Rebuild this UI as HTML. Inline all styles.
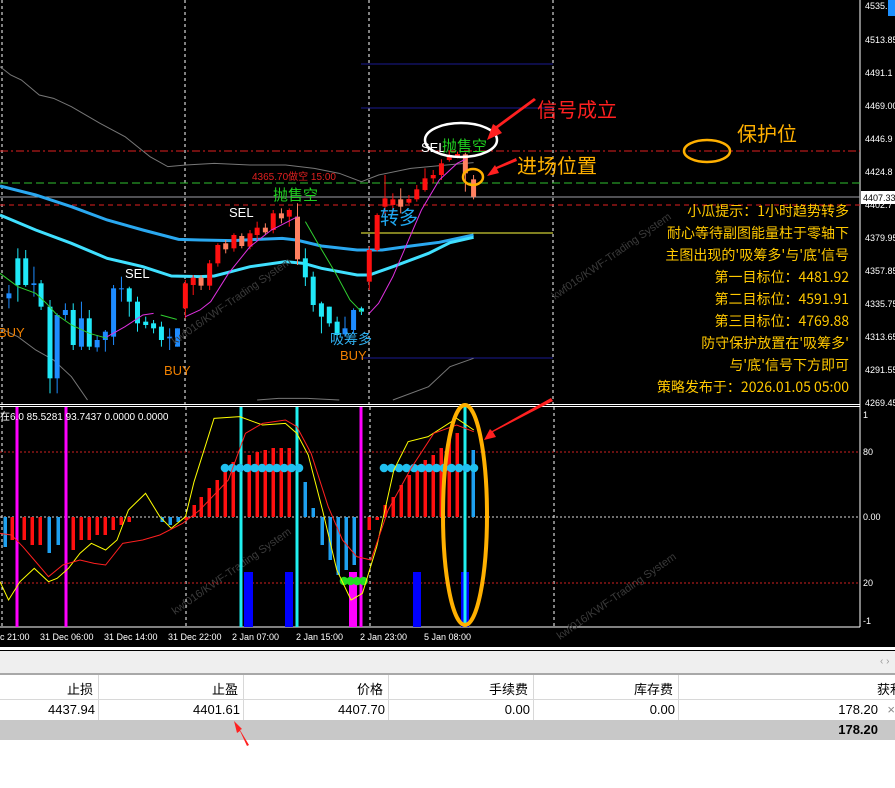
<!DOCTYPE html>
<html><head><meta charset="utf-8">
<style>
html,body{margin:0;padding:0;background:#fff;}
body{width:895px;height:788px;overflow:hidden;position:relative;font-family:"Liberation Sans","Noto Sans CJK SC",sans-serif;}
svg{position:absolute;left:0;top:0;}
.tb{position:absolute;left:0;width:895px;font-size:13px;color:#000;}
.cell{position:absolute;text-align:right;}
</style></head><body>
<svg id="s" width="895" height="788" viewBox="0 0 895 788" xmlns="http://www.w3.org/2000/svg">
<rect x="0" y="0" width="895" height="647" fill="#000"/>
<rect x="0" y="647" width="895" height="3" fill="#fff"/>
<rect x="0" y="650" width="895" height="1" fill="#000"/>
<rect x="0" y="651" width="895" height="22" fill="#efefef"/>
<rect x="0" y="673" width="895" height="2" fill="#a8a8a8"/>
<rect x="0" y="699" width="895" height="1" fill="#d8d8d8"/>
<rect x="0" y="720" width="895" height="20" fill="#c8c8c8"/>
<g fill="#d8d8d8"><rect x="98" y="675" width="1" height="45"/><rect x="243" y="675" width="1" height="45"/><rect x="388" y="675" width="1" height="45"/><rect x="533" y="675" width="1" height="45"/><rect x="678" y="675" width="1" height="45"/></g>
<text x="880" y="664" font-size="10" fill="#999">‹ ›</text>

<g stroke="#fff" stroke-dasharray="3,3" stroke-width="1">
<line x1="2" y1="0" x2="2" y2="404"/><line x1="185" y1="0" x2="185" y2="404"/><line x1="369" y1="0" x2="369" y2="404"/><line x1="553" y1="0" x2="553" y2="404"/>
</g>
<line x1="860" y1="0" x2="860" y2="627" stroke="#fff"/>
<line x1="0" y1="404.5" x2="860" y2="404.5" stroke="#fff"/>
<line x1="0" y1="406.5" x2="860" y2="406.5" stroke="#fff"/>
<line x1="0" y1="627" x2="860" y2="627" stroke="#fff"/>

<g stroke="#1a1a90" stroke-width="1"><line x1="361" y1="64" x2="553" y2="64"/><line x1="361" y1="108" x2="553" y2="108"/><line x1="361" y1="358" x2="553" y2="358"/></g>
<line x1="0" y1="151" x2="860" y2="151" stroke="#e02020" stroke-dasharray="8,3,2,3"/>
<line x1="0" y1="183" x2="860" y2="183" stroke="#30c030" stroke-dasharray="8,4"/>
<line x1="0" y1="197" x2="860" y2="197" stroke="#a0a0a8"/>
<line x1="0" y1="205" x2="860" y2="205" stroke="#e02020" stroke-dasharray="5,4"/>
<line x1="361" y1="233" x2="553" y2="233" stroke="#ffff40"/>

<g id="main" transform="scale(0.35714,0.33333)" fill="none">
<polyline vector-effect="non-scaling-stroke" stroke="#777" stroke-width="1" points="0,200 30,225 60,240 110,285 150,295 200,320 280,370 350,410 420,470 470,500 520,495 600,490 700,495 800,495 880,505 950,520 1012,545 1060,525 1150,505 1250,495 1326,488"/>
<polyline vector-effect="non-scaling-stroke" stroke="#777" stroke-width="1" points="0,985 50,1010 100,1050 150,1080 200,1130 245,1200"/>
<polyline vector-effect="non-scaling-stroke" stroke="#777" stroke-width="1" points="720,1200 780,1195 860,1195 950,1200"/>
<polyline vector-effect="non-scaling-stroke" stroke="#777" stroke-width="1" points="1100,1200 1200,1160 1260,1100 1326,1075"/>
<polyline vector-effect="non-scaling-stroke" stroke="#2aa8f0" stroke-width="3" points="0,558 100,585 200,620 300,660 400,690 500,718 560,720 650,722 720,718 790,715 830,720 900,738 1000,750 1070,750 1150,738 1230,727 1326,705"/>
<polyline vector-effect="non-scaling-stroke" stroke="#40e0ff" stroke-width="3" points="0,645 100,690 200,730 300,775 400,800 480,828 560,830 600,828 700,800 800,785 850,790 900,805 1000,825 1034,825 1100,800 1200,760 1260,728 1326,712"/>
<g id="candles"></g>
<polyline vector-effect="non-scaling-stroke" stroke="#e030e0" stroke-width="1" points="300,1010 350,980 400,945 430,940"/>
<polyline vector-effect="non-scaling-stroke" stroke="#e030e0" stroke-width="1" points="519,950 560,930 590,905 640,820 700,740 760,690 833,650"/>
<polyline vector-effect="non-scaling-stroke" stroke="#e030e0" stroke-width="1" points="1034,940 1060,910 1100,830 1140,730 1180,630 1230,540 1280,490 1303,478"/>
<polyline vector-effect="non-scaling-stroke" stroke="#30d030" stroke-width="1" points="0,820 50,860 100,880 130,910 160,945 200,975 250,1000 300,1015"/>
<polyline vector-effect="non-scaling-stroke" stroke="#30d030" stroke-width="1" points="450,945 495,958"/>
<polyline vector-effect="non-scaling-stroke" stroke="#30d030" stroke-width="1" points="855,665 890,730 940,820 980,900 1012,935"/>
</g>

<g fill="#3a3a3a" font-size="11">
<text transform="translate(175,345) rotate(-35)">kwf016/KWF-Trading System</text>
<text transform="translate(555,300) rotate(-35)">kwf016/KWF-Trading System</text>
<text transform="translate(175,615) rotate(-35)">kwf016/KWF-Trading System</text>
<text transform="translate(560,640) rotate(-35)">kwf016/KWF-Trading System</text>
</g>

<g font-family="Liberation Sans,Noto Sans CJK SC,sans-serif">
<text x="252" y="180" font-size="10" fill="#e02020">4365.70做空 15:00</text>
<text x="273" y="200" font-size="15" fill="#20d020" font-family="Noto Sans CJK SC,sans-serif">抛售空</text>
<text x="229" y="217" font-size="13" fill="#fff">SEL</text>
<text x="125" y="278" font-size="13" fill="#fff">SEL</text>
<text x="-2" y="337" font-size="13" fill="#f08000">BUY</text>
<text x="164" y="375" font-size="13" fill="#f08000">BUY</text>
<text x="330" y="344" font-size="14" fill="#30b0f0" font-family="Noto Sans CJK SC,sans-serif">吸筹多</text>
<text x="340" y="360" font-size="13" fill="#f08000">BUY</text>
<text x="380" y="224" font-size="19" fill="#20a8f0" font-family="Noto Sans CJK SC,sans-serif">转多</text>
<text x="421" y="152" font-size="13" fill="#fff">SEL</text>
<text x="442" y="151" font-size="15" fill="#20d020" font-family="Noto Sans CJK SC,sans-serif">抛售空</text>
<ellipse cx="461" cy="140" rx="36" ry="17" fill="none" stroke="#fff" stroke-width="2.5"/>
<ellipse cx="473" cy="177" rx="10" ry="8" fill="none" stroke="#ffb000" stroke-width="2.5"/>
<ellipse cx="707" cy="151" rx="23" ry="11" fill="none" stroke="#ffb000" stroke-width="2.5"/>
<polygon points="536,100 498,128 502,133 487,140 493,124 496,126 534,98" fill="#ff2020"/>
<polygon points="517,161 497,169 499,173 487,176 495,165 496,167 516,158" fill="#ff2020"/>
<text x="537" y="117" font-size="20" fill="#ff2020" font-family="Noto Sans CJK SC,sans-serif">信号成立</text>
<text x="517" y="173" font-size="20" fill="#ffb000" font-family="Noto Sans CJK SC,sans-serif">进场位置</text>
<text x="737" y="141" font-size="20" fill="#ffb000" font-family="Noto Sans CJK SC,sans-serif">保护位</text>
<g font-size="14" fill="#ffc800" text-anchor="end" font-family="Noto Sans CJK SC,sans-serif">
<text x="849" y="216">小瓜提示：1小时趋势转多</text>
<text x="849" y="238">耐心等待副图能量柱于零轴下</text>
<text x="849" y="260">主图出现的'吸筹多'与'底'信号</text>
<text x="849" y="282">第一目标位：4481.92</text>
<text x="849" y="304">第二目标位：4591.91</text>
<text x="849" y="326">第三目标位：4769.88</text>
<text x="849" y="348">防守保护放置在'吸筹多'</text>
<text x="849" y="370">与'底'信号下方即可</text>
<text x="849" y="392">策略发布于：2026.01.05 05:00</text>
</g>
</g>

<g font-size="9" fill="#fff">
<text x="865" y="9">4535.1</text><text x="865" y="43">4513.85</text><text x="865" y="76">4491.1</text><text x="865" y="109">4469.00</text><text x="865" y="142">4446.9</text><text x="865" y="175">4424.8</text><text x="865" y="208">4402.7</text><text x="865" y="241">4379.95</text><text x="865" y="274">4357.85</text><text x="865" y="307">4335.75</text><text x="865" y="340">4313.65</text><text x="865" y="373">4291.55</text><text x="865" y="406">4269.45</text>
</g>
<rect x="888" y="0" width="7" height="16" fill="#1e90ff"/>
<rect x="861" y="191" width="34" height="13" fill="#fff"/>
<text x="863" y="201" font-size="9" fill="#000">4407.33</text>

<g stroke="#fff" stroke-dasharray="3,3"><line x1="2" y1="407" x2="2" y2="627"/><line x1="186" y1="407" x2="186" y2="627"/><line x1="370" y1="407" x2="370" y2="627"/><line x1="554" y1="407" x2="554" y2="627"/></g>
<line x1="0" y1="452" x2="860" y2="452" stroke="#d02020" stroke-dasharray="2,2"/>
<line x1="0" y1="517" x2="860" y2="517" stroke="#ddd" stroke-dasharray="2,2"/>
<line x1="0" y1="583" x2="860" y2="583" stroke="#d02020" stroke-dasharray="2,2"/>
<g id="hist"></g>
<g fill="#0000ff"><rect x="244" y="572" width="9" height="55"/><rect x="285" y="572" width="8" height="55"/><rect x="413" y="572" width="8" height="55"/><rect x="461" y="572" width="8" height="55"/></g>
<rect x="349" y="572" width="8" height="55" fill="#ff00ff"/>
<g stroke="#ff00ff" stroke-width="3"><line x1="17" y1="407" x2="17" y2="627"/><line x1="66" y1="407" x2="66" y2="627"/><line x1="361" y1="407" x2="361" y2="627"/></g>
<g stroke="#20f0f0" stroke-width="3"><line x1="241" y1="407" x2="241" y2="627"/><line x1="297" y1="407" x2="297" y2="627"/><line x1="465" y1="407" x2="465" y2="627"/></g>
<g id="dots"></g>
<g transform="translate(0,400) scale(0.5708,0.33333)" fill="none">
<polyline vector-effect="non-scaling-stroke" stroke="#ffff00" points="0,545 15,600 35,545 60,505 85,545 100,535 120,505 140,460 160,430 185,450 205,420 225,330 255,280 280,350 300,385 325,350 340,245 375,55 420,50 460,75 500,70 520,100 540,165 565,330 590,510 615,600 635,580 660,440 690,210 715,125 750,110 800,55 830,90"/>
<polyline vector-effect="non-scaling-stroke" stroke="#ff2020" points="0,400 20,405 40,440 60,480 85,530 110,495 140,480 165,490 185,495 215,430 250,420 280,405 320,370 350,330 400,240 430,100 460,70 500,60 520,80 545,160 575,320 600,420 625,470 650,480 680,330 720,205 760,100 800,75 830,95"/>
</g>
<ellipse cx="465" cy="515" rx="22" ry="110" fill="none" stroke="#ffb000" stroke-width="4"/>
<polygon points="553,401 493,432 496,437 484,440 490,429 492,431 551,398" fill="#ff2020"/>
<text x="0" y="420" font-size="10" fill="#fff">在6.0 85.5281 93.7437 0.0000 0.0000</text>
<g font-size="9" fill="#fff"><text x="863" y="418">1</text><text x="863" y="455">80</text><text x="863" y="520">0.00</text><text x="863" y="586">20</text><text x="863" y="624">-1</text></g>
<g font-size="9" fill="#fff"><text x="0" y="640">c 21:00</text><text x="40" y="640">31 Dec 06:00</text><text x="104" y="640">31 Dec 14:00</text><text x="168" y="640">31 Dec 22:00</text><text x="232" y="640">2 Jan 07:00</text><text x="296" y="640">2 Jan 15:00</text><text x="360" y="640">2 Jan 23:00</text><text x="424" y="640">5 Jan 08:00</text></g>

<polygon points="247,746 240,731 237,733 234,721 242,729 240,730 249,745" fill="#ff2020"/>
</svg>

<div class="tb" style="top:679px;height:20px;">
<div class="cell" style="right:802px;">止损</div>
<div class="cell" style="right:657px;">止盈</div>
<div class="cell" style="right:512px;">价格</div>
<div class="cell" style="right:367px;">手续费</div>
<div class="cell" style="right:222px;">库存费</div>
<div class="cell" style="right:-8px;">获利</div>
</div>
<div class="tb" style="top:702px;height:18px;">
<div class="cell" style="right:800px;">4437.94</div>
<div class="cell" style="right:655px;">4401.61</div>
<div class="cell" style="right:510px;">4407.70</div>
<div class="cell" style="right:365px;">0.00</div>
<div class="cell" style="right:220px;">0.00</div>
<div class="cell" style="right:17px;">178.20</div>
<div class="cell" style="right:0px;color:#888;">×</div>
</div>
<div class="tb" style="top:722px;height:18px;font-weight:bold;">
<div class="cell" style="right:17px;">178.20</div>
</div>

<script>
var NS="http://www.w3.org/2000/svg";
var col={B:"#1e8cff",C:"#20e8f8",R:"#ff1010",S:"#ff8060"};
var cd=[[25,880,895,855,925,"B"],[50,775,855,745,905,"C"],[72,775,855,750,860,"C"],[95,850,855,800,890,"B"],[115,850,920,840,930,"C"],[140,920,1135,900,1180,"C"],[160,945,1135,940,1180,"B"],[183,930,945,910,960,"B"],[205,930,1035,910,1050,"C"],[228,955,1040,905,1050,"B"],[250,955,1040,930,1050,"C"],[272,1020,1042,1005,1055,"B"],[295,995,1020,990,1055,"B"],[318,865,1010,855,1035,"B"],[340,865,868,830,905,"B"],[362,865,905,860,950,"C"],[385,905,970,890,995,"C"],[408,965,975,950,985,"C"],[430,970,985,960,1000,"C"],[452,980,1020,965,1040,"C"],[475,1010,1015,985,1050,"B"],[497,985,1040,985,1040,"B"],
[519,850,925,840,955,"R"],[541,833,855,825,885,"R"],[563,833,857,825,870,"S"],[587,790,857,780,870,"R"],[610,735,790,730,800,"R"],[632,730,748,720,760,"S"],[655,705,745,700,755,"R"],[677,708,738,700,745,"S"],[700,700,740,690,748,"R"],[720,683,705,665,720,"R"],[743,683,697,670,705,"S"],[765,640,690,630,700,"R"],[788,640,655,625,670,"S"],[810,630,650,625,680,"R"],[833,650,778,610,795,"S"],[855,775,832,745,858,"C"],[877,830,915,815,935,"C"],[900,910,950,905,1000,"C"],[922,920,970,920,980,"C"],[944,965,1005,950,1010,"C"],[966,985,1003,950,1010,"B"],[990,930,990,925,1000,"B"],[1012,925,935,920,945,"C"],[1034,750,845,740,870,"R"],[1056,645,750,640,755,"R"],[1078,595,620,525,650,"R"],[1100,598,615,580,640,"R"],[1122,598,620,565,640,"S"],[1145,597,608,585,612,"R"],[1167,568,598,555,605,"R"],[1190,535,570,505,575,"R"],[1213,525,535,510,550,"R"],[1236,490,525,478,540,"R"],[1258,470,480,455,485,"R"],[1281,462,470,455,475,"R"],[1303,463,520,458,575,"S"],[1326,538,590,525,598,"S"]];
var g=document.getElementById("candles");
cd.forEach(function(c){var l=document.createElementNS(NS,"line");l.setAttribute("x1",c[0]);l.setAttribute("x2",c[0]);l.setAttribute("y1",c[3]);l.setAttribute("y2",c[4]);l.setAttribute("stroke",col[c[5]]);l.setAttribute("vector-effect","non-scaling-stroke");g.appendChild(l);
var r=document.createElementNS(NS,"rect");r.setAttribute("x",c[0]-7);r.setAttribute("y",c[1]);r.setAttribute("width",14);r.setAttribute("height",Math.max(c[2]-c[1],3));r.setAttribute("fill",col[c[5]]);g.appendChild(r);});
var h=[[5,547,"B"],[12,540,"R"],[24,540,"R"],[32,545,"R"],[40,545,"R"],[49,553,"B"],[58,545,"B"],[73,550,"R"],[81,540,"R"],[89,540,"R"],[97,535,"R"],[105,535,"R"],[113,530,"R"],[121,525,"R"],[129,522,"R"],[162,522,"B"],[170,525,"B"],[178,522,"B"],[186,520,"R"],[194,505,"R"],[201,497,"R"],[209,488,"R"],[217,480,"R"],[225,470,"R"],[233,462,"R"],[249,455,"R"],[257,452,"R"],[265,450,"R"],[273,448,"R"],[281,448,"R"],[289,448,"R"],[305,482,"B"],[313,508,"B"],[322,545,"B"],[330,560,"B"],[338,575,"B"],[346,570,"B"],[354,565,"B"],[369,530,"R"],[377,520,"R"],[385,505,"R"],[393,497,"R"],[401,485,"R"],[409,475,"R"],[417,465,"R"],[425,460,"R"],[433,455,"R"],[441,448,"R"],[449,440,"R"],[457,433,"R"],[473,450,"B"]];
var hg=document.getElementById("hist");
h.forEach(function(b){var r=document.createElementNS(NS,"rect");var y0=517,y1=b[1];r.setAttribute("x",b[0]-1.5);r.setAttribute("y",Math.min(y0,y1));r.setAttribute("width",3.5);r.setAttribute("height",Math.abs(y1-y0));r.setAttribute("fill",b[2]=="R"?"#ff1010":"#1ea0f0");hg.appendChild(r);});
var dg=document.getElementById("dots");
function dot(x,y,c){var e=document.createElementNS(NS,"circle");e.setAttribute("cx",x);e.setAttribute("cy",y);e.setAttribute("r",4.3);e.setAttribute("fill",c);dg.appendChild(e);}
for(var x=225;x<=306;x+=7.4)dot(x,468,"#20c0f0");
for(var x=384;x<=474;x+=7.5)dot(x,468,"#20c0f0");
for(var x=344;x<=364;x+=6.5)dot(x,581,"#20e020");
</script>
</body></html>
